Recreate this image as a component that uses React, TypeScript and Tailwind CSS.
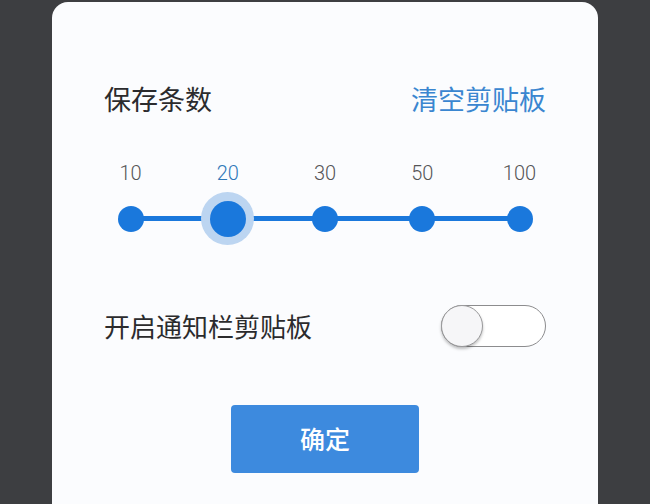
const STEPS = ['10', '20', '30', '50', '100']
const SELECTED = 1

export default function App() {
  return (
    <div
      className="w-[650px] h-[504px] overflow-hidden bg-[#3d3e41] pt-[2px]"
      style={{ fontFamily: '"Noto Sans CJK SC", "Noto Sans", sans-serif' }}
    >
      <div className="ml-[52px] w-[546px] h-[520px] rounded-[16px] bg-[#fbfcfe] px-[52px] pt-[79px]">
        {/* Header */}
        <div className="flex items-center justify-between h-[36px] text-[27px] leading-[36px]">
          <span className="text-[#2b2b2d]">保存条数</span>
          <span className="text-[#3a86d0]">清空剪贴板</span>
        </div>

        {/* Step labels */}
        <div className="mt-[43px] flex justify-between h-[26px]">
          {STEPS.map((s, i) => (
            <span
              key={s}
              className={`w-[53px] text-center text-[20px] leading-[26px] font-light ${i === SELECTED ? 'text-[#2f78b8]' : 'text-[#555557]'}`}
              style={{ fontFamily: 'Roboto, "Noto Sans", sans-serif' }}
            >
              {s}
            </span>
          ))}
        </div>

        {/* Slider */}
        <div className="relative mt-[6px] flex justify-between h-[53px]">
          <div className="absolute left-[26px] right-[26px] top-[24px] h-[5px] bg-[#1a78dc]" />
          {STEPS.map((s, i) => (
            <div key={s} className="relative w-[53px] h-[53px] flex items-center justify-center">
              {i === SELECTED ? (
                <div className="w-[53px] h-[53px] rounded-full bg-[#bcd5f1] flex items-center justify-center">
                  <div className="w-[36px] h-[36px] rounded-full bg-[#1a78dc]" />
                </div>
              ) : (
                <div className="w-[26px] h-[26px] rounded-full bg-[#1a78dc]" />
              )}
            </div>
          ))}
        </div>

        {/* Notification toggle */}
        <div className="mt-[60px] flex items-center justify-between h-[42px]">
          <span className="text-[26px] leading-[36px] text-[#2b2b2d]">开启通知栏剪贴板</span>
          <div className="w-[105px] h-[42px] rounded-full border border-[#8c8c8e] bg-white flex items-center">
            <div className="w-[42px] h-[42px] -ml-px rounded-full border border-[#9a9a9c] bg-[#f6f6f8] shadow-[0_2px_3px_rgba(0,0,0,0.25)]" />
          </div>
        </div>

        {/* Confirm */}
        <div className="mt-[58px] flex justify-center">
          <button className="w-[188px] h-[68px] rounded-[4px] bg-[#3d8ade] text-white text-[25px] font-medium">
            确定
          </button>
        </div>
      </div>
    </div>
  )
}
